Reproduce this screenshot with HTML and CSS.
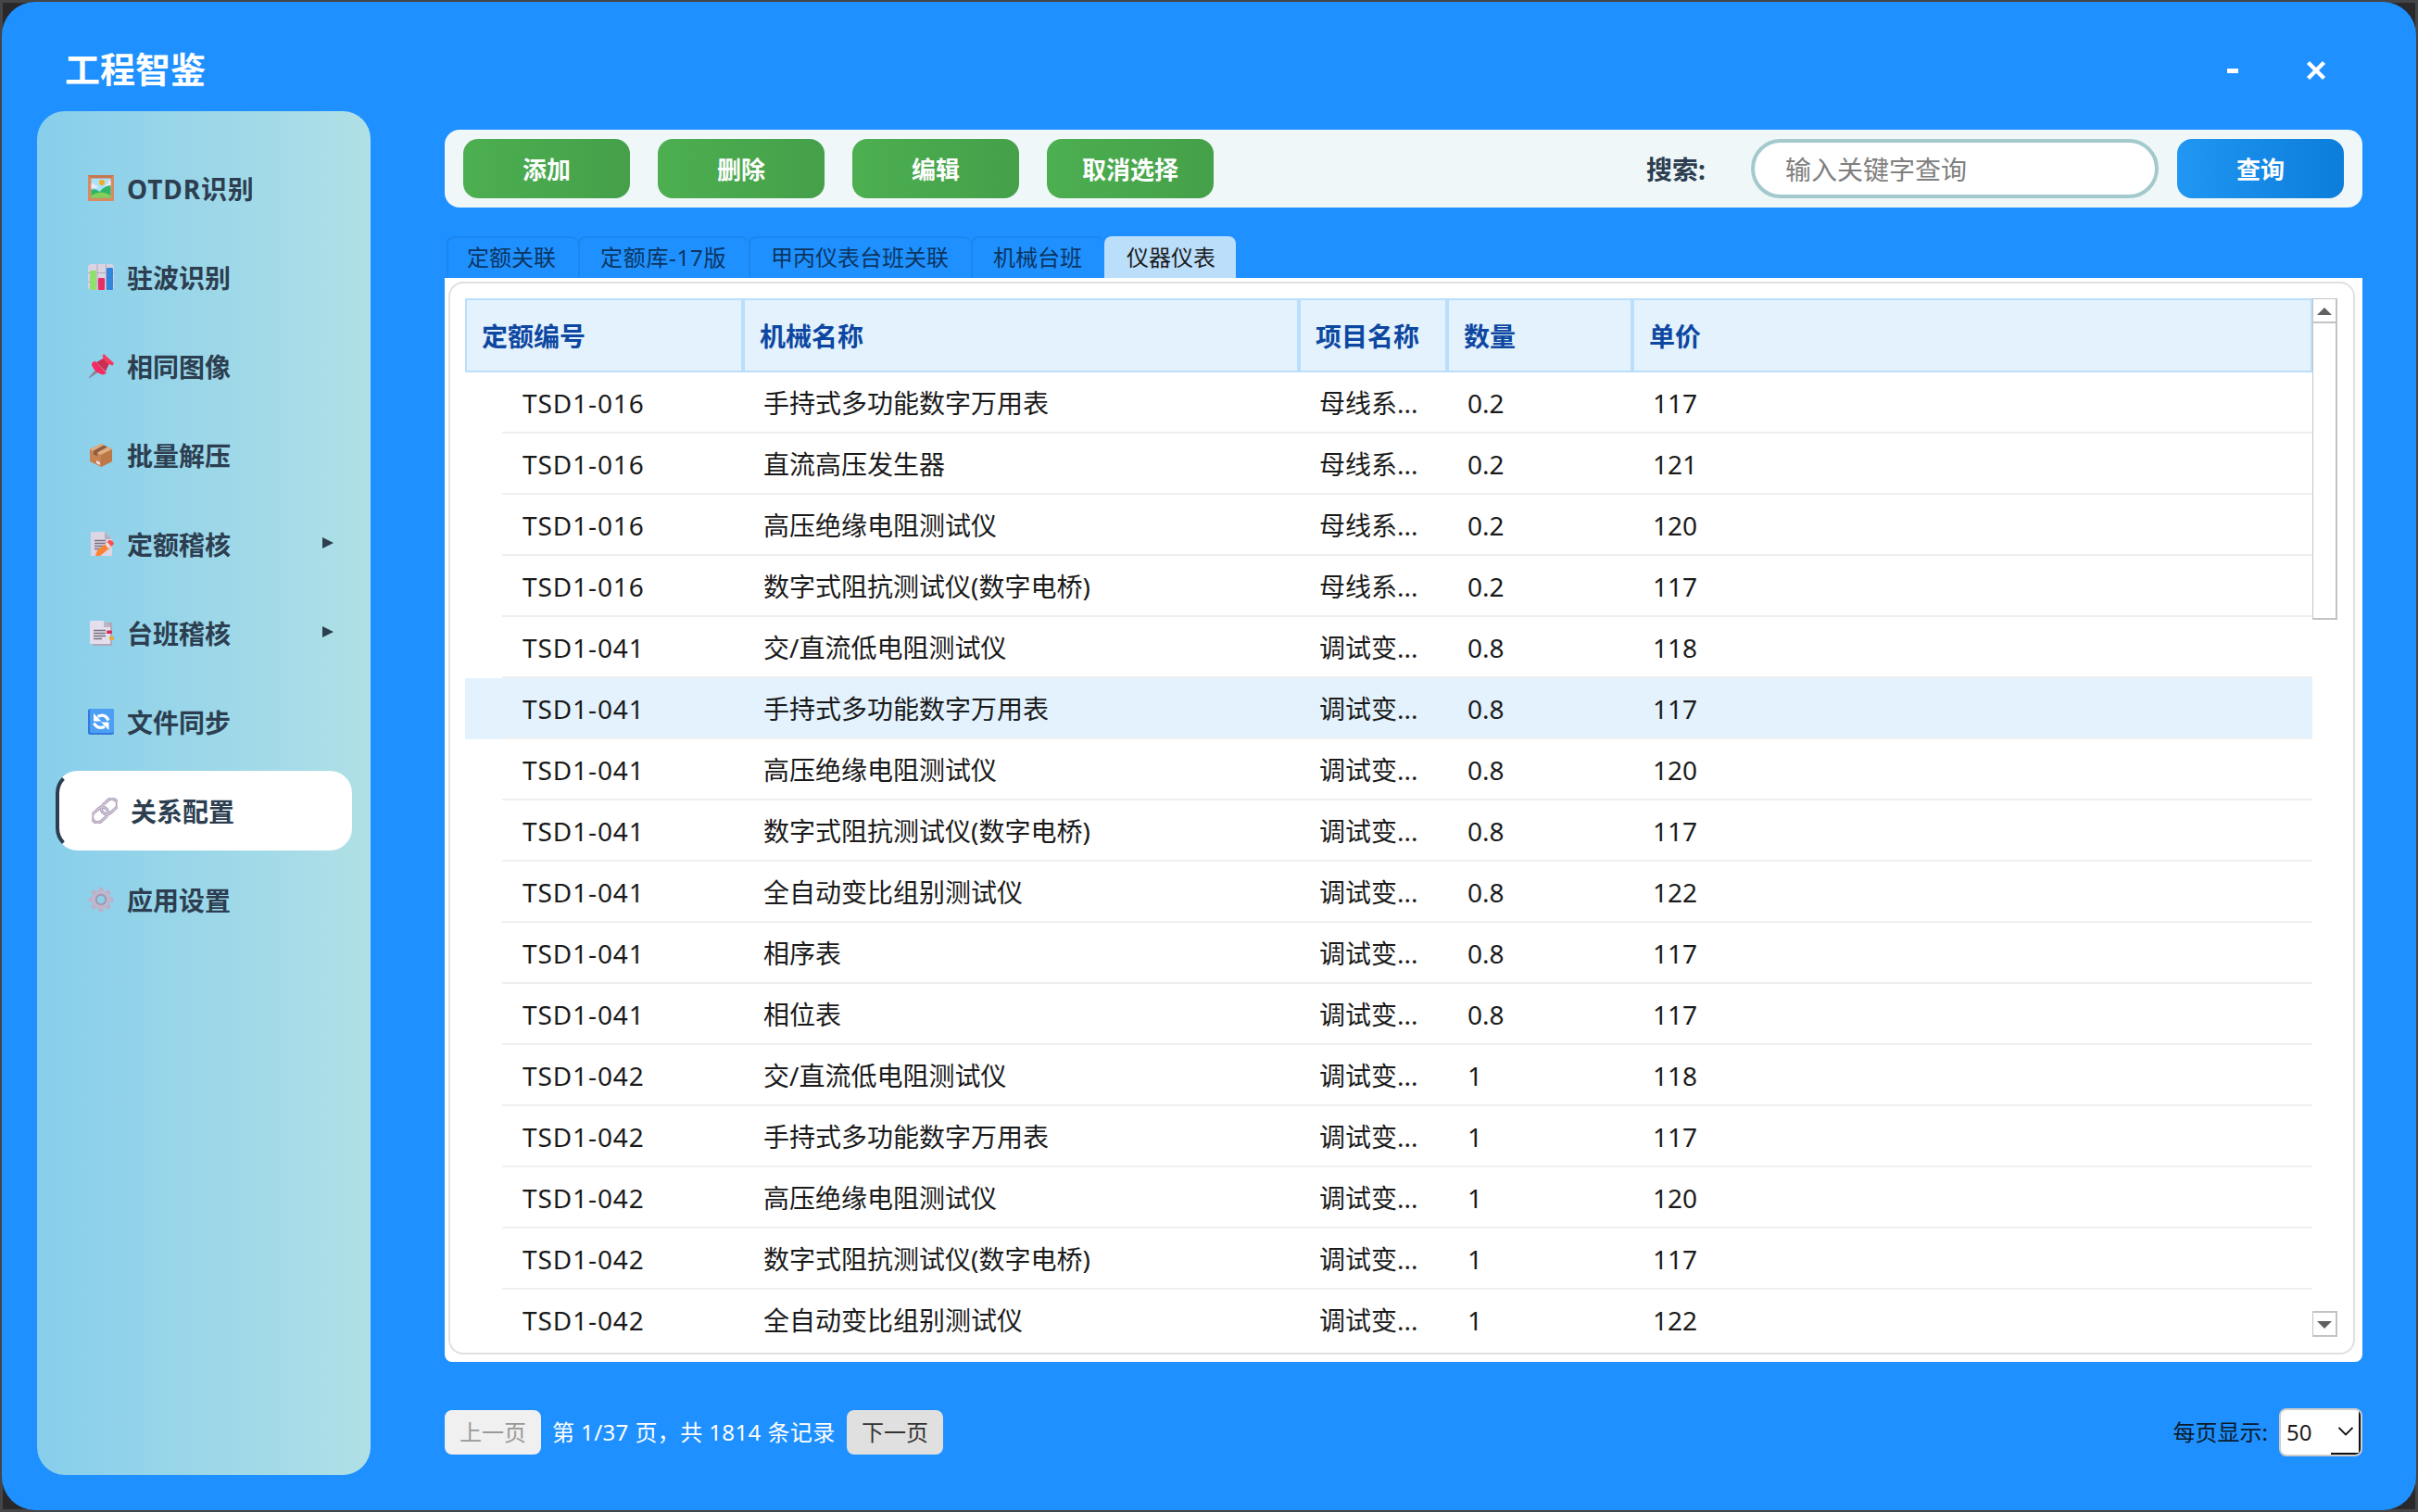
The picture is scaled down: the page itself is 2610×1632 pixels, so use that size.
FILE: index.html
```html
<!DOCTYPE html>
<html lang="zh-CN">
<head>
  <meta charset="UTF-8" />
  <meta name="viewport" content="width=device-width, initial-scale=1" />
  <title>工程智鉴</title>
  <link rel="stylesheet" href="styles.css">
</head>
<body>

  <div class="window">
    <header class="titlebar">
      <h1>工程智鉴</h1>
      <div class="window-controls">
        <button class="ctrl" aria-label="最小化"><svg viewBox="0 0 24 24"><path d="M6 12.5h12" stroke="#fff" stroke-width="5"/></svg></button>
        <button class="ctrl" aria-label="关闭"><svg viewBox="0 0 24 24"><path d="M3.5 3.5l17 17M20.5 3.5l-17 17" stroke="#fff" stroke-width="4.4"/></svg></button>
      </div>
    </header>

    <div class="layout">
      <nav class="sidebar">
        <a class="nav-item">
          <svg class="icon" viewBox="0 0 28 28">
            <rect width="28" height="28" fill="#d98a5f"/>
            <path d="M0 0h28l-4 4H4z" fill="#c77750"/>
            <rect x="3.5" y="3.5" width="21" height="21" fill="#a8e2fb"/>
            <path d="M3.5 9q3-1 4 2 3 0 3 3h-7zM24.5 6v7h-6q0-3 3-4 0-3 3-3z" fill="#eee8fa"/>
            <circle cx="15" cy="8" r="3" fill="#f9a81c"/>
            <path d="M3.5 16q5-2 9 2 6-7 12-7v13.5h-21z" fill="#2fb566"/>
            <path d="M3.5 22q11-7 21 0v2.5h-21z" fill="#84cf57"/>
          </svg>
          <span class="latin">OTDR识别</span>
        </a>
        <a class="nav-item">
          <svg class="icon" viewBox="0 0 28 28">
            <rect width="28" height="28" rx="4" fill="#d9d3e2"/>
            <path d="M0 9.5h28M0 19h28M10 0v28M19.5 0v28" stroke="#b3aabf" stroke-width="1"/>
            <rect x="2" y="7" width="7" height="21" rx="1" fill="#8fe070"/>
            <rect x="11" y="15" width="7" height="13" rx="1" fill="#e62e67"/>
            <rect x="20" y="4" width="7" height="24" rx="1" fill="#2f86dc"/>
          </svg>
          <span>驻波识别</span>
        </a>
        <a class="nav-item">
          <svg class="icon" viewBox="0 0 28 28">
            <path d="M1 27l9-11 3 3z" fill="#8c8598" stroke="#8c8598"/>
            <path d="M8 9l12 13-4 1.5Q7 21 4 13q0-4 4-4z" fill="#f8295f"/>
            <path d="M9 10l9-5 5 6-4 9z" fill="#c92d52"/>
            <path d="M17 1l11 10-1.5 2.5Q18 12 15.5 3z" fill="#f8385f"/>
          </svg>
          <span>相同图像</span>
        </a>
        <a class="nav-item">
          <svg class="icon" viewBox="0 0 28 28">
            <path d="M14 2l12 6v13l-12 6L2 21V8z" fill="#c88352"/>
            <path d="M14 2l12 6-12 6L2 8z" fill="#e0ad7c"/>
            <path d="M14 14l12-6v13l-12 6z" fill="#bd7849"/>
            <path d="M17 3.5L6 9.5v4l4 2v-4l11-6z" fill="#8e5b43"/>
            <path d="M9 20l4 2v3l-4-2z" fill="#eadfe9"/>
          </svg>
          <span>批量解压</span>
        </a>
        <a class="nav-item">
          <svg class="icon" viewBox="0 0 28 28">
            <path d="M3 1h15l8 8v18H3z" fill="#dcd5e3"/>
            <path d="M18 1v8h8z" fill="#b8b0c2"/>
            <path d="M7 10.5h12M7 13.5h14M7 16.5h11M7 19.5h7" stroke="#77707f" stroke-width="1.3"/>
            <path d="M8 27l2-6 10-8 4 5-11 9z" fill="#fb8335"/>
            <path d="M19 13l4-3q4 0 5 4l-4 4z" fill="#f9504c"/>
            <path d="M18 14l3-2 4 5-3 2z" fill="#e9dcea"/>
          </svg>
          <span>定额稽核</span>
          <i class="arrow"></i>
        </a>
        <a class="nav-item">
          <svg class="icon" viewBox="0 0 28 28">
            <path d="M5 3h21v25H5z" fill="#b0a9b8"/>
            <path d="M2 1h15l7 7v18H2z" fill="#e5dfed"/>
            <path d="M17 1v7h7z" fill="#bcb5c6"/>
            <path d="M6 11.5h13M6 14.5h13M6 17.5h13M6 20.5h9" stroke="#77707f" stroke-width="1.3"/>
            <rect x="20" y="11.5" width="6" height="3.5" rx="1" fill="#d92c5b"/>
            <rect x="23" y="18" width="5" height="4" rx="1" fill="#e3ac36"/>
          </svg>
          <span>台班稽核</span>
          <i class="arrow"></i>
        </a>
        <a class="nav-item">
          <svg class="icon" viewBox="0 0 28 28">
            <rect width="28" height="28" rx="2.5" fill="#3378dd"/>
            <rect x="2" width="26" height="26" rx="2" fill="#4c9ff5"/>
            <path d="M10.5 8.5q8-4 11.5 4M18 19.5q-8 3-11.5-4" fill="none" stroke="#fff" stroke-width="3.2"/>
            <path d="M6 5v8.5h8.5zM22.5 23V14.5H14z" fill="#fff"/>
          </svg>
          <span>文件同步</span>
        </a>
        <a class="nav-item active">
          <svg class="icon" viewBox="0 0 28 28">
            <g fill="none" stroke="#aa9cb5" stroke-width="3.2">
              <rect x="-0.5" y="12.5" width="19" height="12" rx="6" transform="rotate(-42 9 18.5)"/>
              <rect x="9.5" y="3.5" width="19" height="12" rx="6" transform="rotate(-42 19 9.5)"/>
            </g>
            <g fill="none" stroke="#d3c9da" stroke-width="1.4">
              <rect x="-0.5" y="12.5" width="19" height="12" rx="6" transform="rotate(-42 9 18.5)"/>
              <rect x="9.5" y="3.5" width="19" height="12" rx="6" transform="rotate(-42 19 9.5)"/>
            </g>
          </svg>
          <span>关系配置</span>
        </a>
        <a class="nav-item">
          <svg class="icon" viewBox="0 0 28 28">
            <g stroke="#bdb0c9" stroke-width="5.5" stroke-linecap="round">
              <path d="M14 3.2v21.6M3.2 14h21.6M6.4 6.4l15.2 15.2M21.6 6.4L6.4 21.6"/>
            </g>
            <circle cx="14" cy="14" r="9.8" fill="#c2b6cd"/>
            <circle cx="14" cy="14" r="5.2" fill="#8dd0ea" stroke="#a297b0" stroke-width="2"/>
          </svg>
          <span>应用设置</span>
        </a>
      </nav>

      <main class="content">
        <div class="toolbar">
          <button class="btn">添加</button>
          <button class="btn">删除</button>
          <button class="btn">编辑</button>
          <button class="btn">取消选择</button>
          <label class="search-label" for="keyword">搜索:</label>
          <input class="search-input" id="keyword" type="text" placeholder="输入关键字查询">
          <button class="btn btn-query">查询</button>
        </div>

        <div class="tabs">
          <span class="tab">定额关联</span>
          <span class="tab latin">定额库-17版</span>
          <span class="tab">甲丙仪表台班关联</span>
          <span class="tab">机械台班</span>
          <span class="tab selected">仪器仪表</span>
        </div>

        <div class="panel">
          <div class="frame">
            <div class="table">
              <div class="row head">
                <div>定额编号</div><div>机械名称</div><div>项目名称</div><div>数量</div><div>单价</div>
              </div>
              <div id="rows"></div>
            </div>
            <div class="scrollbar">
              <div class="scroll-btn"><svg viewBox="0 0 24 24"><path d="M4 17l8-8 8 8z" fill="#606060"/></svg></div>
              <div class="scroll-thumb"></div>
              <div class="scroll-btn down"><svg viewBox="0 0 24 24"><path d="M4 9l8 8 8-8z" fill="#606060"/></svg></div>
            </div>
          </div>
        </div>

        <div class="pager">
          <button class="page-btn disabled">上一页</button>
          <span class="page-info">第 1/37 页，共 1814 条记录</span>
          <button class="page-btn">下一页</button>
          <span class="size-label">每页显示:</span>
          <div class="size-select">
            <span>50</span>
            <svg viewBox="0 0 16 10"><path d="M0.5 1l7.5 7.5L15.5 1" fill="none" stroke="#111" stroke-width="1.8"/></svg>
          </div>
        </div>
      </main>
    </div>
  </div>

  <script>
    const data = [
      ['TSD1-016', '手持式多功能数字万用表', '母线系...', '0.2', 117],
      ['TSD1-016', '直流高压发生器', '母线系...', '0.2', 121],
      ['TSD1-016', '高压绝缘电阻测试仪', '母线系...', '0.2', 120],
      ['TSD1-016', '数字式阻抗测试仪(数字电桥)', '母线系...', '0.2', 117],
      ['TSD1-041', '交/直流低电阻测试仪', '调试变...', '0.8', 118],
      ['TSD1-041', '手持式多功能数字万用表', '调试变...', '0.8', 117],
      ['TSD1-041', '高压绝缘电阻测试仪', '调试变...', '0.8', 120],
      ['TSD1-041', '数字式阻抗测试仪(数字电桥)', '调试变...', '0.8', 117],
      ['TSD1-041', '全自动变比组别测试仪', '调试变...', '0.8', 122],
      ['TSD1-041', '相序表', '调试变...', '0.8', 117],
      ['TSD1-041', '相位表', '调试变...', '0.8', 117],
      ['TSD1-042', '交/直流低电阻测试仪', '调试变...', '1', 118],
      ['TSD1-042', '手持式多功能数字万用表', '调试变...', '1', 117],
      ['TSD1-042', '高压绝缘电阻测试仪', '调试变...', '1', 120],
      ['TSD1-042', '数字式阻抗测试仪(数字电桥)', '调试变...', '1', 117],
      ['TSD1-042', '全自动变比组别测试仪', '调试变...', '1', 122]
    ];
    const hovered = 5;

    document.getElementById('rows').innerHTML = data.map((r, i) => `
      <div class="row${i === hovered ? ' hover' : ''}">
        ${r.map(c => `<div>${c}</div>`).join('')}
      </div>
    `).join('');
  </script>

</body>
</html>
```
FILE: styles.css
```css
* {
  box-sizing: border-box;
}

body {
  margin: 0;
  height: 100vh;
  padding: 2px;
  background: #29292c;
  box-shadow: inset 0 0 0 3px #454547;
  font-family: 'Noto Sans', 'Noto Sans CJK SC', sans-serif;
  color: #1a1a1a;
  overflow: hidden;
}

button {
  border: none;
  font-family: inherit;
  padding: 0;
}

.window {
  width: 2606px;
  height: 1628px;
  border-radius: 36px;
  background: #1e90ff;
  padding: 38px;
  display: flex;
  flex-direction: column;
}

.titlebar {
  height: 80px;
  display: flex;
  justify-content: space-between;
  align-items: center;
  padding: 0 40px 0 30px;
}

.titlebar h1 {
  margin: 0 0 12px;
  color: white;
  font-size: 38px;
  font-weight: 700;
  line-height: 60px;
}

.window-controls {
  display: flex;
  gap: 30px;
  margin-bottom: 8px;
}

.ctrl {
  width: 60px;
  height: 60px;
  background: none;
}

.ctrl svg {
  width: 24px;
  height: 24px;
  display: block;
  margin: auto;
}

.layout {
  flex: 1;
  display: flex;
  gap: 80px;
}

.sidebar {
  width: 360px;
  height: 1472px;
  padding: 40px 20px;
  border-radius: 30px;
  background: linear-gradient(90deg, #87ceeb, #b0e0e6);
  display: flex;
  flex-direction: column;
  gap: 10px;
}

.nav-item {
  height: 86px;
  padding: 0 20px 0 35px;
  border-radius: 24px;
  display: flex;
  align-items: center;
  color: #2c3e50;
  font-size: 28px;
  font-weight: 700;
}

.nav-item .latin {
  letter-spacing: 0.9px;
}

.nav-item.active {
  background: #fff;
  border: 4px solid #fff;
  border-left-color: #2c3e50;
}

.icon {
  width: 28px;
  height: 28px;
  margin-right: 14px;
}

.arrow {
  margin: 0 0 3px auto;
  border-left: 12px solid #2c3e50;
  border-top: 6px solid transparent;
  border-bottom: 6px solid transparent;
}

.content {
  width: 2070px;
  padding-top: 20px;
}

.toolbar {
  height: 84px;
  padding: 0 20px;
  border-radius: 16px;
  background: #eff7f9;
  display: flex;
  align-items: center;
}

.btn {
  width: 180px;
  height: 64px;
  margin-right: 30px;
  border-radius: 16px;
  background: linear-gradient(90deg, #4caf50, #45a049);
  color: white;
  font-size: 26px;
  font-weight: 700;
}

.btn-query {
  margin: 0 0 0 20px;
  background: linear-gradient(90deg, #2196f3, #0b7dda);
}

.search-label {
  margin-left: auto;
  width: 113px;
  color: #2c3e50;
  font-size: 28px;
  font-weight: 700;
}

.search-input {
  width: 440px;
  height: 64px;
  border: 4px solid #a3c9cc;
  border-radius: 32px;
  padding: 2px 32px 0 33px;
  font-family: inherit;
  font-size: 28px;
}

.search-input::placeholder {
  color: #808080;
}

.tabs {
  display: flex;
  height: 45px;
  margin-top: 31px;
}

.tab {
  border: 2px solid #1b86ef;
  border-bottom: none;
  border-right: none;
  border-radius: 8px 8px 0 0;
  padding: 0 24px 0 22px;
  font-size: 24px;
  line-height: 42px;
  color: #0b3560;
}

.tab:first-child {
  margin-left: 2px;
  padding: 0 24px 0 20px;
}

.tab.latin {
  letter-spacing: 0.7px;
}

.tab.selected {
  padding-right: 22px;
  background: #bbdefb;
  border-color: #bbdefb;
  color: #1a1a1a;
}

.panel {
  height: 1170px;
  padding: 4px 8px 8px 4px;
  background: #fff;
  border-radius: 0 0 8px 8px;
}

.frame {
  height: 1158px;
  padding: 16px;
  border: 2px solid #e0e0e0;
  border-radius: 16px;
  display: flex;
}

.table {
  width: 1994px;
  height: 1122px;
  overflow: hidden;
}

.row {
  display: grid;
  grid-template-columns: 300px 600px 160px 200px 1fr;
  height: 66px;
  font-size: 28px;
  line-height: 67px;
  background: linear-gradient(#efefef, #efefef) 40px 100% / 100% 2px no-repeat;
}

.row div {
  padding-left: 22px;
  white-space: nowrap;
}

.row div:first-child {
  padding-left: 62px;
  letter-spacing: 0.9px;
}

.row.hover {
  background-color: #e3f2fd;
}

.row.head {
  height: 80px;
  background: #e3f2fd;
  color: #0d47a1;
  font-weight: 700;
  line-height: 78px;
}

.row.head div,
.row.head div:first-child {
  height: 80px;
  border: 2px solid #bbdefb;
  padding-left: 16px;
  letter-spacing: 0;
}

.scrollbar {
  width: 27px;
  height: 1121px;
  display: flex;
  flex-direction: column;
}

.scroll-btn {
  height: 27px;
  border: 2px solid #c3c3c3;
  border-top-width: 1px;
  border-left-width: 1px;
}

.scroll-btn svg {
  display: block;
  width: 24px;
  height: 24px;
}

.scroll-btn.down {
  height: 28px;
  margin-top: auto;
  border-top-width: 2px;
}

.scroll-thumb {
  height: 320px;
  border: 2px solid #c3c3c3;
  border-left-width: 1px;
  border-top: none;
}

.pager {
  height: 52px;
  margin-top: 50px;
  display: flex;
  align-items: center;
  font-size: 24px;
}

.page-btn {
  width: 104px;
  height: 48px;
  padding-bottom: 3px;
  border-radius: 8px;
  background: #e0e0e0;
  color: #333;
  font-size: 24px;
}

.page-btn.disabled {
  background: #f0f0f0;
  color: #999;
}

.page-info {
  width: 330px;
  padding: 0 0 3px 12px;
  color: white;
  letter-spacing: 0.4px;
  white-space: nowrap;
}

.size-label {
  margin-left: auto;
  margin-right: 12px;
  padding-bottom: 3px;
  color: #0a1a2a;
}

.size-select {
  width: 90px;
  height: 52px;
  border: 2px solid #ccc;
  border-radius: 8px;
  background:
    linear-gradient(#111, #111) 100% 0 / 2px 100% no-repeat,
    linear-gradient(#111, #111) 100% 100% / 32px 2px no-repeat,
    #fff;
  padding: 0 8px 2px 6px;
  display: flex;
  align-items: center;
  justify-content: space-between;
}

.size-select svg {
  width: 16px;
  height: 10px;
}
```
